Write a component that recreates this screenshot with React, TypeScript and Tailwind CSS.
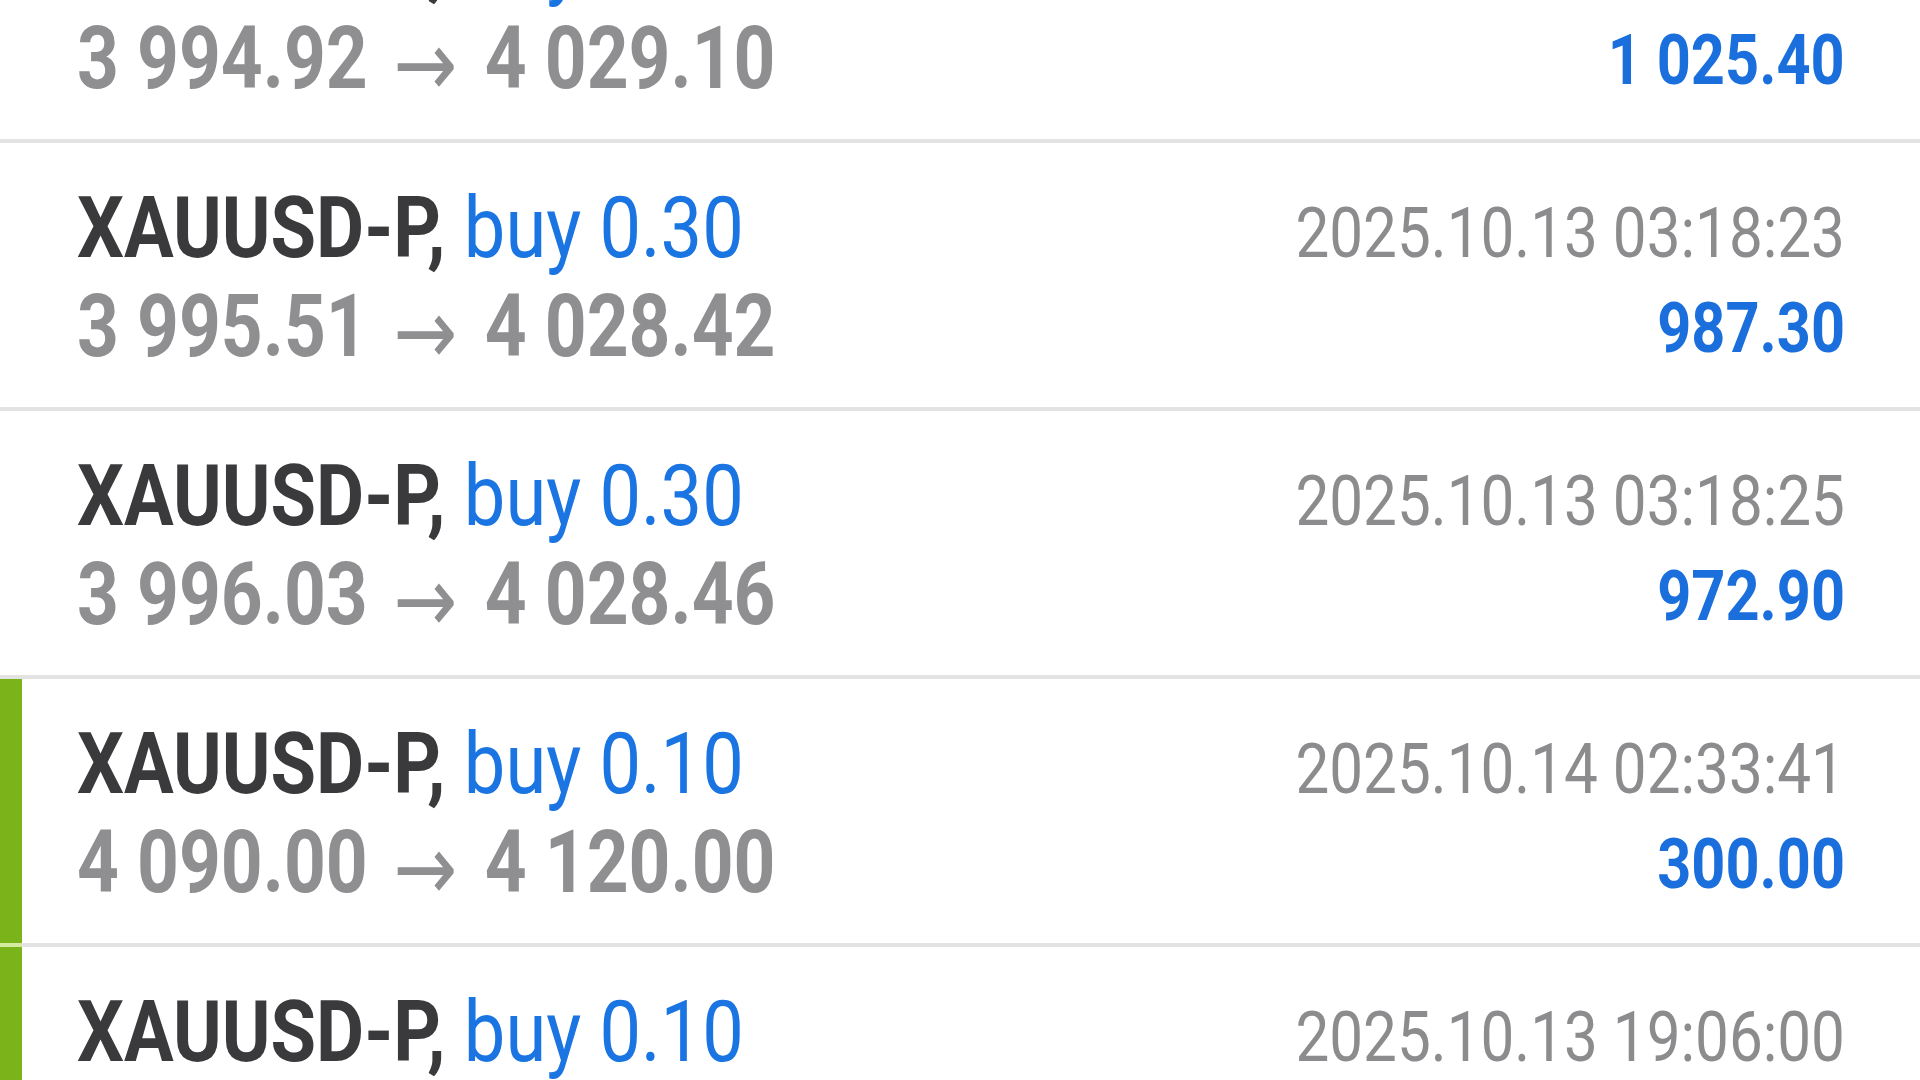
import React from 'react';

interface Deal {
    symbol: string;
    side: string;
    volume: string;
    openPrice: string;
    closePrice: string;
    time: string;
    profit: string;
    marked?: boolean;
    markedBelow?: boolean;
}

const deals: Deal[] = [
    {symbol: "XAUUSD-P", side: "buy", volume: "0.30", openPrice: "3 994.92", closePrice: "4 029.10", time: "2025.10.13 03:18:21", profit: "1 025.40"},
    {symbol: "XAUUSD-P", side: "buy", volume: "0.30", openPrice: "3 995.51", closePrice: "4 028.42", time: "2025.10.13 03:18:23", profit: "987.30"},
    {symbol: "XAUUSD-P", side: "buy", volume: "0.30", openPrice: "3 996.03", closePrice: "4 028.46", time: "2025.10.13 03:18:25", profit: "972.90"},
    {symbol: "XAUUSD-P", side: "buy", volume: "0.10", openPrice: "4 090.00", closePrice: "4 120.00", time: "2025.10.14 02:33:41", profit: "300.00", marked: true, markedBelow: true},
    {symbol: "XAUUSD-P", side: "buy", volume: "0.10", openPrice: "4 075.00", closePrice: "4 110.00", time: "2025.10.13 19:06:00", profit: "350.00", marked: true},
];

function DealRow({deal}: {deal: Deal}) {
    return (
        <div className="flex flex-col">
            <div className="flex h-[264px] w-full">
                <div className={deal.marked ? "w-[22px] shrink-0 bg-[#7bb31a]" : "w-[22px] shrink-0"}/>
                <div className="flex flex-1 justify-between pl-[55px] pr-[75px]">
                    <div className="flex flex-col pt-[42px]">
                        <div className="origin-left scale-x-[0.86] whitespace-nowrap text-[86px] leading-none">
                            <span className="font-bold text-[#3a3a3c]">{deal.symbol},</span>{" "}
                            <span className="text-[#1a74e2]">{deal.side} {deal.volume}</span>
                        </div>
                        <div className="mt-[8px] origin-left scale-x-[0.83] whitespace-nowrap text-[88px] font-bold leading-none text-[#8f8f92]">
                            {deal.openPrice}{" "}
                            <span className="relative top-[8px] ml-[9px] mr-[11px] text-[92px] font-normal">→</span>{" "}
                            {deal.closePrice}
                        </div>
                    </div>
                    <div className="flex flex-col items-end pt-[55px]">
                        <div className="origin-right scale-x-[0.86] whitespace-nowrap text-[70px] leading-none text-[#8c8c8e]">
                            {deal.time}
                        </div>
                        <div className="mt-[25px] origin-right scale-x-[0.85] whitespace-nowrap text-[70px] font-bold leading-none text-[#1b6fdc]">
                            {deal.profit}
                        </div>
                    </div>
                </div>
            </div>
            <div className="flex h-[4px] w-full bg-[#e3e3e3]">
                {deal.markedBelow && <div className="w-[22px] bg-[#d3eaa0]"/>}
            </div>
        </div>
    );
}

export default function App() {
    return (
        <div className="h-[1080px] w-full overflow-hidden bg-white font-['Roboto','DejaVu_Sans',sans-serif]">
            <div className="mt-[-125px] flex flex-col">
                {deals.map((deal, i) => (
                    <DealRow key={i} deal={deal}/>
                ))}
            </div>
        </div>
    );
}
